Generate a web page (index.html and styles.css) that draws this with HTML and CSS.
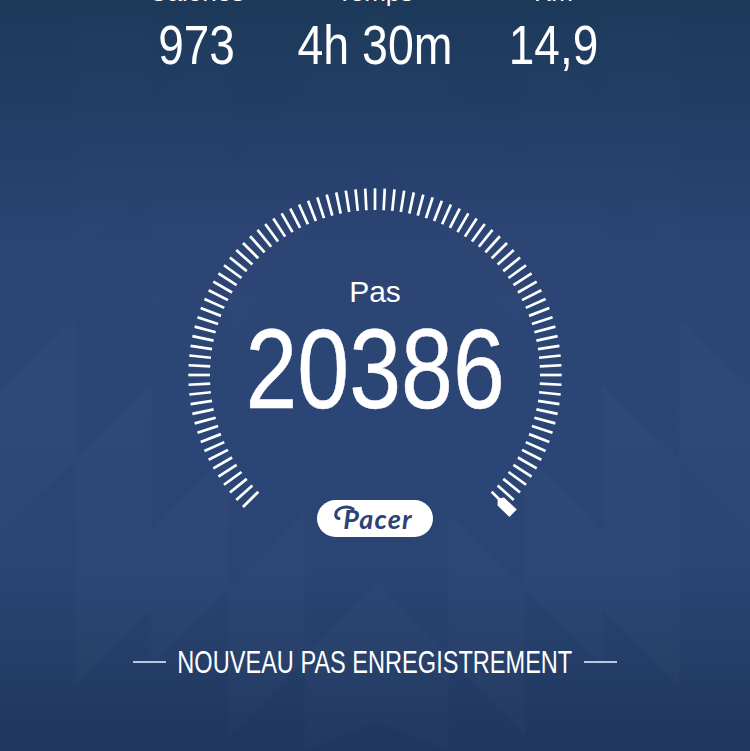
FILE: index.html
```
<!DOCTYPE html>
<html lang="fr">
<head>
    <meta charset="UTF-8">
    <meta name="viewport" content="width=device-width, initial-scale=1.0">
    <title>Pacer</title>
    <link rel="stylesheet" href="styles.css">
</head>
<body>
    <div class="screen">
        <svg class="pattern" viewBox="0 0 750 751" aria-hidden="true">
            <defs>
                <g id="half">
                    <path class="light" d="M0 390L75 319V460L0 533Z"/>
                    <path class="light" d="M75 460L151 385V610L75 685Z"/>
                    <path class="light" d="M151 530L229 452V590L151 665Z"/>
                    <path class="light" d="M229 590L305 512V660L229 736Z"/>
                    <path class="light" d="M305 655L377 583V722L305 751Z"/>
                    <path class="faint" d="M75 0H151V180L75 255Z"/>
                    <path class="faint" d="M151 100L229 25V235L151 310Z"/>
                    <path class="faint" d="M229 165L305 90V260L229 335Z"/>
                    <path class="faint" d="M305 80L377 10V160L305 232Z"/>
                </g>
            </defs>
            <use href="#half"/>
            <use href="#half" transform="translate(754 0) scale(-1 1)"/>
        </svg>

        <div class="stats">
            <div class="stat calories">
                <div class="label">Calories</div>
                <div class="value">973</div>
            </div>
            <div class="stat time">
                <div class="label">Temps</div>
                <div class="value">4h 30m</div>
            </div>
            <div class="stat distance">
                <div class="label">Km</div>
                <div class="value">14,9</div>
            </div>
        </div>

        <div class="dial">
            <svg class="ticks" viewBox="0 0 376 376" aria-hidden="true">
                <g id="ticks"></g>
                <path class="marker" d="M310.6 311.8L317 310.6L329.8 322.4L322.4 330L310.6 318.6Z"/>
            </svg>
            <div class="dial-label">Pas</div>
            <div class="steps">20386</div>
            <div class="logo">
                <svg class="swash" viewBox="0 0 30 30" aria-hidden="true">
                    <path d="M7 15.500C2 14.500 3 8 8 5.500C12 3.500 18 3.500 21 6"/>
                </svg>
                <span>Pacer</span>
            </div>
        </div>

        <div class="record">
            <span class="line"></span>
            <div class="record-text"><span>NOUVEAU PAS ENREGISTREMENT</span></div>
            <span class="line"></span>
        </div>
    </div>

    <script>
        // one tick every 3 degrees, open at the bottom
        const ticks = document.getElementById('ticks');
        for (let angle = -135; angle <= 135; angle += 3) {
            const tick = document.createElementNS('http://www.w3.org/2000/svg', 'line');
            tick.setAttribute('x1', 188);
            tick.setAttribute('x2', 188);
            tick.setAttribute('y1', 1.3);
            tick.setAttribute('y2', 23);
            tick.setAttribute('transform', `rotate(${angle} 188 188)`);
            ticks.appendChild(tick);
        }
    </script>
</body>
</html>
```

FILE: styles.css
```
* {
    box-sizing: border-box;
}

body {
    margin: 0;
    font-family: "Liberation Sans", Arial, sans-serif;
    color: #fff;
}

.screen {
    position: relative;
    width: 750px;
    height: 751px;
    overflow: hidden;
    background: linear-gradient(#1d3959 0, #203c61 70px, #253f6b 150px, #2b4474 240px, #2b4676 400px, #2a4474 570px, #253f6a 650px, #1f365e 751px);
}

.pattern {
    position: absolute;
    top: 0;
    left: 0;
    width: 100%;
    height: 100%;
}

.light {
    fill: rgba(255, 255, 255, 0.016);
}

.faint {
    fill: rgba(255, 255, 255, 0.008);
}

.stats {
    position: relative;
    display: flex;
    height: 187px;
    padding-left: 126px;
    text-align: center;
}

.stat {
    margin-top: -22px;
    white-space: nowrap;
}

.calories {
    width: 141px;
}

.time {
    width: 216px;
}

.distance {
    width: 141px;
}

.label {
    height: 29px;
    font-size: 26px;
    line-height: 29px;
}

.value {
    margin-top: 6px;
    font-size: 56px;
    line-height: 64px;
    transform: scaleX(0.82);
}

.time .value {
    transform: scaleX(0.83);
}

.dial {
    position: relative;
    display: flex;
    flex-direction: column;
    align-items: center;
    width: 376px;
    height: 376px;
    margin: 0 auto;
    padding-top: 88px;
}

.ticks {
    position: absolute;
    top: 0;
    left: 0;
    width: 376px;
    height: 376px;
}

.ticks line {
    stroke: #fff;
    stroke-width: 2.7;
}

.marker {
    fill: #fff;
}

.dial-label {
    font-size: 30px;
    line-height: 34px;
}

.steps {
    font-size: 113px;
    line-height: 120px;
    transform: scaleX(0.825);
    -webkit-text-stroke: 0.5px #fff;
}

.logo {
    position: relative;
    width: 116px;
    height: 37px;
    margin-top: 71px;
    padding-left: 6px;
    border-radius: 19px;
    background-color: #fff;
    color: #2b4474;
    font: italic 700 27px/38px Lato, sans-serif;
    letter-spacing: 1.2px;
    text-align: center;
}

.swash {
    position: absolute;
    top: 3px;
    left: 15px;
    width: 30px;
    height: 30px;
    fill: none;
    stroke: #2b4474;
    stroke-width: 3;
    stroke-linecap: round;
}

.record {
    position: relative;
    display: flex;
    align-items: center;
    justify-content: space-between;
    width: 484px;
    height: 40px;
    margin: 79px auto 0;
}

.line {
    width: 33px;
    height: 2px;
    background-color: #b9c8e0;
}

.record-text {
    display: flex;
    justify-content: center;
    width: 394px;
    padding-top: 2px;
    font-size: 31px;
    white-space: nowrap;
}

.record-text span {
    transform: scaleX(0.76);
}
```
